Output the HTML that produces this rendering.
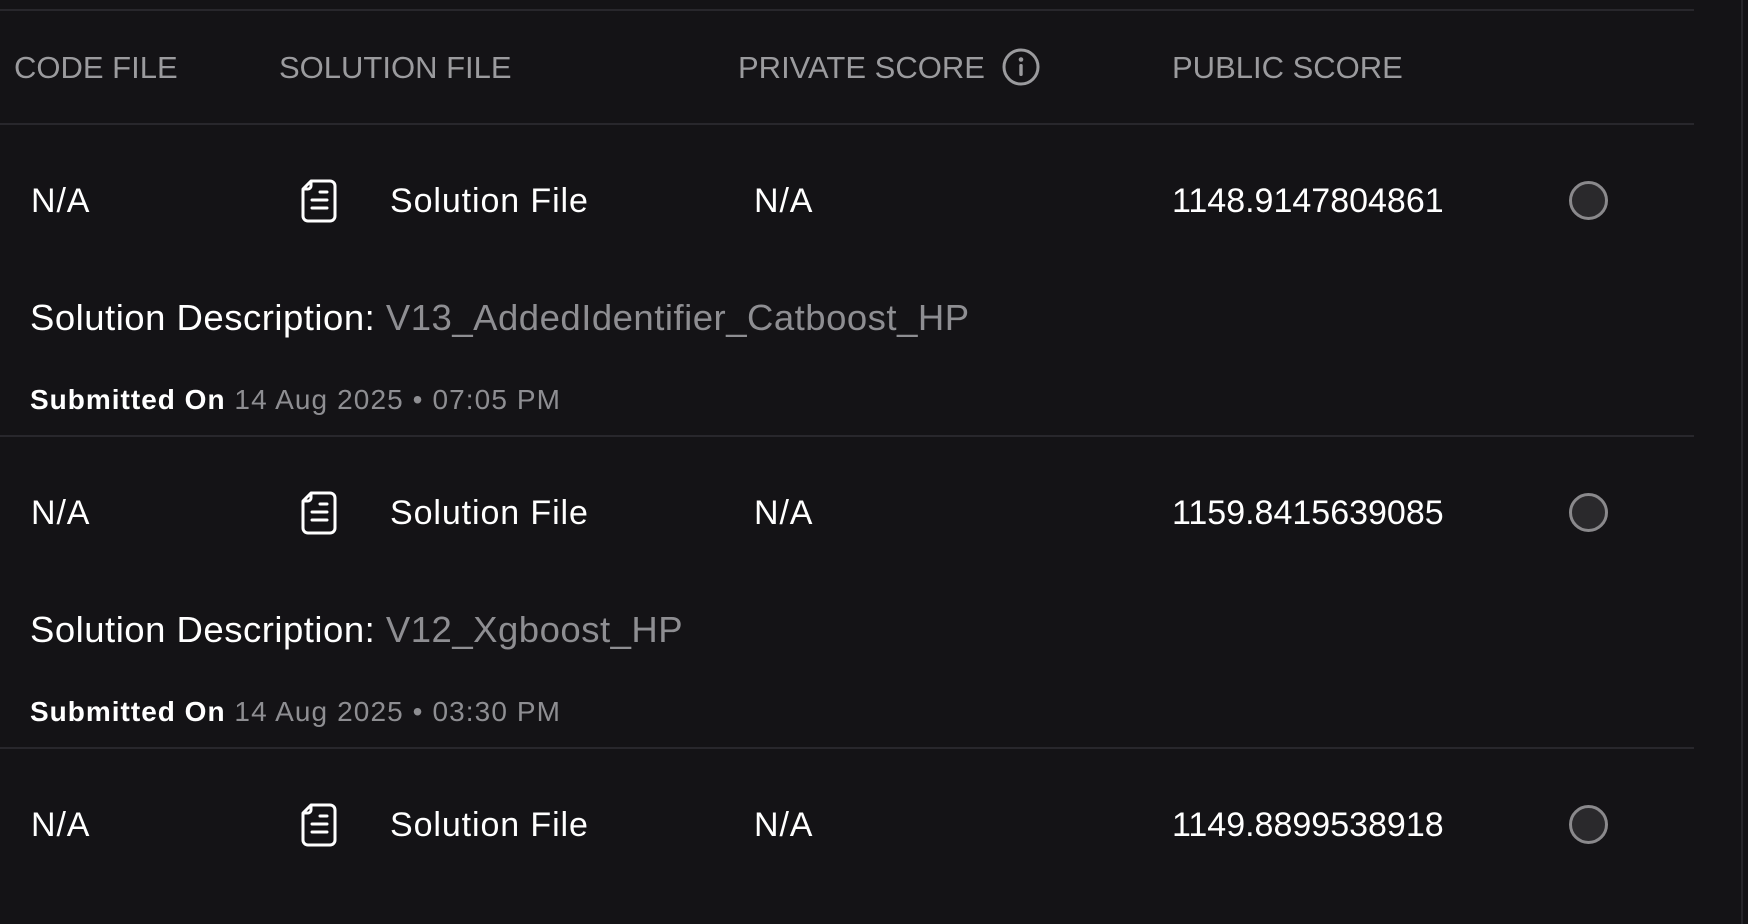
<!DOCTYPE html>
<html><head><meta charset="utf-8"><style>
html,body{margin:0;padding:0;}
body{width:1748px;height:924px;background:#141316;position:relative;overflow:hidden;font-family:"Liberation Sans",sans-serif;color:#fff;}
.a{position:absolute;white-space:nowrap;line-height:1;}
.hl{position:absolute;left:0;width:1694px;height:2px;background:#28272c;}
.h{color:#9b9b9e;font-size:31px;top:52px;}
.m{font-size:34px;letter-spacing:0.9px;}
.sc{letter-spacing:0;}
.d{font-size:36.5px;letter-spacing:0.5px;}
.d span{color:#8e8e92;}
.s{font-size:28px;letter-spacing:1.1px;color:#8e8e92;}
.s b{color:#fff;letter-spacing:1px;}
.c{position:absolute;left:1569px;width:33px;height:33px;border:3px solid #8a898c;border-radius:50%;background:#2a292c;}
.ic{position:absolute;left:299px;}
</style></head><body>
<div class="hl" style="top:9px"></div>
<div class="hl" style="top:123px"></div>
<div style="position:absolute;left:1741px;top:0;width:2px;height:924px;background:#26252a"></div>

<div class="a h" style="left:14px">CODE FILE</div>
<div class="a h" style="left:279px">SOLUTION FILE</div>
<div class="a h" style="left:738px">PRIVATE SCORE</div>
<svg class="a" style="left:1001px;top:47px" width="40" height="40" viewBox="0 0 40 40"><circle cx="20" cy="20" r="17" fill="none" stroke="#9b9b9e" stroke-width="3"/><circle cx="20" cy="12.5" r="2.3" fill="#9b9b9e"/><rect x="18.3" y="17" width="3.4" height="12" rx="1.5" fill="#9b9b9e"/></svg>
<div class="a h" style="left:1172px">PUBLIC SCORE</div>

<!-- row 1 -->
<div class="a m" style="left:31px;top:184px">N/A</div>
<svg class="ic" style="top:178px" width="40" height="46" viewBox="0 0 40 46"><path d="M12 3H31a5 5 0 0 1 5 5V38a5 5 0 0 1-5 5H9a5 5 0 0 1-5-5V11Z" fill="none" stroke="#fff" stroke-width="3" stroke-linejoin="round"/><path d="M12 3V8a3 3 0 0 1-3 3H4" fill="none" stroke="#fff" stroke-width="3"/><path d="M21 14H28M13 22H28M13 30H28" stroke="#fff" stroke-width="3" stroke-linecap="round"/></svg>
<div class="a m" style="left:390px;top:184px">Solution File</div>
<div class="a m" style="left:754px;top:184px">N/A</div>
<div class="a m sc" style="left:1172px;top:184px">1148.9147804861</div>
<div class="c" style="top:181px"></div>
<div class="a d" style="left:30px;top:300px">Solution Description: <span>V13_AddedIdentifier_Catboost_HP</span></div>
<div class="a s" style="left:30px;top:386px"><b>Submitted On</b> 14 Aug 2025 • 07:05 PM</div>
<div class="hl" style="top:435px"></div>

<!-- row 2 -->
<div class="a m" style="left:31px;top:496px">N/A</div>
<svg class="ic" style="top:490px" width="40" height="46" viewBox="0 0 40 46"><path d="M12 3H31a5 5 0 0 1 5 5V38a5 5 0 0 1-5 5H9a5 5 0 0 1-5-5V11Z" fill="none" stroke="#fff" stroke-width="3" stroke-linejoin="round"/><path d="M12 3V8a3 3 0 0 1-3 3H4" fill="none" stroke="#fff" stroke-width="3"/><path d="M21 14H28M13 22H28M13 30H28" stroke="#fff" stroke-width="3" stroke-linecap="round"/></svg>
<div class="a m" style="left:390px;top:496px">Solution File</div>
<div class="a m" style="left:754px;top:496px">N/A</div>
<div class="a m sc" style="left:1172px;top:496px">1159.8415639085</div>
<div class="c" style="top:493px"></div>
<div class="a d" style="left:30px;top:612px">Solution Description: <span>V12_Xgboost_HP</span></div>
<div class="a s" style="left:30px;top:698px"><b>Submitted On</b> 14 Aug 2025 • 03:30 PM</div>
<div class="hl" style="top:747px"></div>

<!-- row 3 -->
<div class="a m" style="left:31px;top:808px">N/A</div>
<svg class="ic" style="top:802px" width="40" height="46" viewBox="0 0 40 46"><path d="M12 3H31a5 5 0 0 1 5 5V38a5 5 0 0 1-5 5H9a5 5 0 0 1-5-5V11Z" fill="none" stroke="#fff" stroke-width="3" stroke-linejoin="round"/><path d="M12 3V8a3 3 0 0 1-3 3H4" fill="none" stroke="#fff" stroke-width="3"/><path d="M21 14H28M13 22H28M13 30H28" stroke="#fff" stroke-width="3" stroke-linecap="round"/></svg>
<div class="a m" style="left:390px;top:808px">Solution File</div>
<div class="a m" style="left:754px;top:808px">N/A</div>
<div class="a m sc" style="left:1172px;top:808px">1149.8899538918</div>
<div class="c" style="top:805px"></div>
</body></html>
